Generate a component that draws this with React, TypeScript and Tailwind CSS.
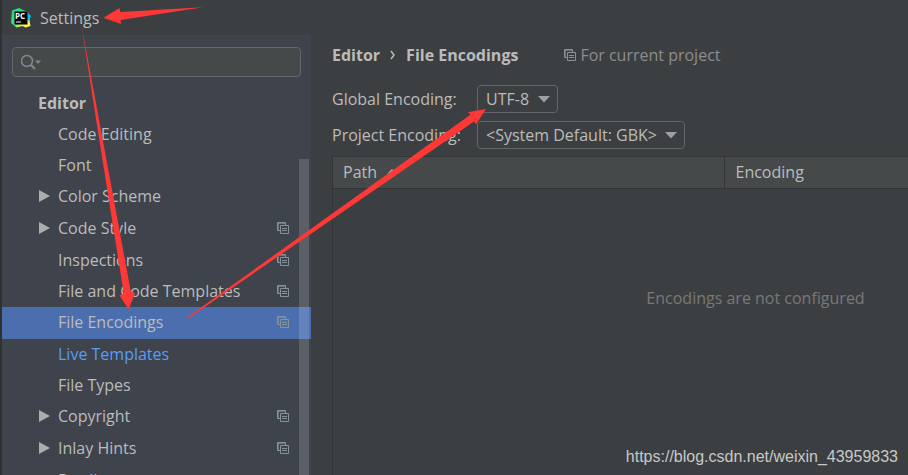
import { useState } from "react";

interface TreeItem {
  label: string;
  expandable?: boolean;
  perProject?: boolean;
  modified?: boolean;
}

const TREE: TreeItem[] = [
  { label: "Code Editing" },
  { label: "Font" },
  { label: "Color Scheme", expandable: true },
  { label: "Code Style", expandable: true, perProject: true },
  { label: "Inspections", perProject: true },
  { label: "File and Code Templates", perProject: true },
  { label: "File Encodings", perProject: true },
  { label: "Live Templates", modified: true },
  { label: "File Types" },
  { label: "Copyright", expandable: true, perProject: true },
  { label: "Inlay Hints", expandable: true, perProject: true },
  { label: "Duplicates" },
];

function Logo() {
  return (
    <svg className="w-5 h-5 shrink-0" viewBox="0 0 20 20" aria-hidden="true">
      <defs>
        <linearGradient id="logo" x1="0" y1="0" x2="1" y2="1">
          <stop offset="0" stopColor="#21d789" />
          <stop offset="0.5" stopColor="#3ddc84" />
          <stop offset="0.75" stopColor="#fcf84a" />
          <stop offset="1" stopColor="#fcf84a" />
        </linearGradient>
      </defs>
      <path d="M1 2.5 8 0l4 2 5 2 2.5 14-5 1.5-3-1.5-6 1.5L0 15z" fill="url(#logo)" />
      <path d="m16 4 4 4-2 5-2-2z" fill="#07c3f2" />
      <rect x="3.5" y="3.5" width="13" height="13" fill="#000" />
      <text x="4" y="10.5" fontSize="8" fontWeight="700" fill="#fff" fontFamily="'Open Sans', sans-serif">
        PC
      </text>
      <path d="M5 14h5" stroke="#fff" strokeWidth="1" />
    </svg>
  );
}

function ProjectIcon() {
  return (
    <svg className="w-3 h-3 shrink-0" viewBox="0 0 12 12" fill="none" stroke="#87939a" aria-hidden="true">
      <path d="M3 8.5H.5v-8h8V3" />
      <path d="M1 1.5h7M1.5 1v7" strokeOpacity="0.6" />
      <path d="M3.5 3.5h8v8h-8z" />
      <path d="M5 6.5h5M5 8.5h5" />
    </svg>
  );
}

function Combo({ id, options }: { id: string; options: string[] }) {
  return (
    <div className="relative w-fit">
      <select
        id={id}
        className="block appearance-none h-7 pl-2 pr-[27px] rounded border border-[#646769] bg-[#3c3f41] text-[#bbbbbb] outline-none"
      >
        {options.map((o) => (
          <option key={o}>{o}</option>
        ))}
      </select>
      <svg className="absolute right-2 top-2.5 w-3 h-2 pointer-events-none" viewBox="0 0 12 8" fill="#9da0a2" aria-hidden="true">
        <path d="M0 1h12L6 7.5z" />
      </svg>
    </div>
  );
}

// Pointers laid over the whole window
function Arrows() {
  return (
    <svg
      className="absolute -left-0.5 top-0 w-[908px] h-[475px] pointer-events-none"
      viewBox="0 0 908 475"
      fill="#fe3737"
      aria-hidden="true"
    >
      <path d="M103.5 17.7 119.5 8l.8 4L203 7.3 120.7 20l.3 4z" />
      <path d="M81.5 25 99.3 121 130.7 291l4.3 2.3-6.3 16.2-9.2-14 4.3-2L96.3 121z" />
      <path d="M187 317.5 470.7 114.5 467.7 112.3 486 109 476 124.5 474 121.5 188 318.5z" />
    </svg>
  );
}

export default function App() {
  const [selected, setSelected] = useState("File Encodings");
  const [query, setQuery] = useState("");

  return (
    <div className="relative flex flex-col h-screen overflow-hidden border-l-2 border-[#2f3132] bg-[#3c3f41] text-[#bbbbbb] text-base font-['Open_Sans','Noto_Sans',sans-serif]">
      <header className="flex items-center gap-[9px] h-[35px] shrink-0 pl-[9px]">
        <Logo />
        <h1>Settings</h1>
      </header>

      <div className="flex flex-1 min-h-0">
        <aside className="relative flex flex-col w-[309px] shrink-0 overflow-hidden bg-[#3f434c]">
          <label className="flex items-center gap-px h-[30px] shrink-0 mt-3 mx-2.5 pl-2 rounded-sm border border-[#646769] bg-[#45494a]">
            <svg className="w-5 h-4 shrink-0" viewBox="0 0 20 16" fill="none" stroke="#7f8b91" aria-hidden="true">
              <circle cx="6" cy="7" r="5.5" strokeWidth="1.5" />
              <path d="m10 11 4 4" strokeWidth="2" />
              <path d="M14 6.5h6l-3 3.5z" fill="#7f8b91" stroke="none" />
            </svg>
            <input
              type="text"
              aria-label="Search settings"
              value={query}
              onChange={(e) => setQuery(e.target.value)}
              className="flex-1 min-w-0 bg-transparent outline-none"
            />
          </label>

          <nav className="flex flex-col mt-[11px]">
            <h2 className="h-[31px] shrink-0 pl-9 leading-[30px] font-bold">Editor</h2>
            {TREE.map((item) => (
              <button
                key={item.label}
                type="button"
                onClick={() => setSelected(item.label)}
                className={`flex items-center shrink-0 pl-9 pr-[22px] pb-0.5 text-left whitespace-nowrap ${
                  item.expandable || item.label === selected ? "h-8" : "h-[31px]"
                } ${item.label === selected ? "bg-[#4b6eaf]" : ""} ${item.modified ? "text-[#589df6]" : ""}`}
              >
                <span className="w-5 shrink-0">
                  {item.expandable && (
                    <svg className="w-3 h-3" viewBox="0 0 12 12" fill="#adadad" aria-hidden="true">
                      <path d="M1 0v12l11-6z" />
                    </svg>
                  )}
                </span>
                <span className="flex-1">{item.label}</span>
                {item.perProject && <ProjectIcon />}
              </button>
            ))}
          </nav>
          <div className="absolute right-0.5 top-[124px] bottom-0 w-2.5 bg-white/15" />
        </aside>

        <main className="flex flex-col flex-1 min-w-0 pl-[21px]">
          <div className="flex items-center h-10 shrink-0">
            <h2 className="flex items-center font-bold">
              <span>Editor</span>
              <svg className="w-1.5 h-2.5 mx-2.5" viewBox="0 0 6 10" fill="none" stroke="#bbbbbb" strokeWidth="1.5" aria-hidden="true">
                <path d="m1 1 3 4-3 4" />
              </svg>
              <span>File Encodings</span>
            </h2>
            <p className="flex items-center gap-1 ml-[46px] text-[#8c8c8c]">
              <ProjectIcon />
              For current project
            </p>
          </div>

          <form className="grid grid-cols-[145px_auto] justify-start gap-y-2 mt-2.5 items-center">
            <label htmlFor="global-encoding">Global Encoding:</label>
            <Combo id="global-encoding" options={["UTF-8"]} />
            <label htmlFor="project-encoding">Project Encoding:</label>
            <Combo id="project-encoding" options={["<System Default: GBK>"]} />
          </form>

          <div className="flex flex-col flex-1 mt-[7px] border-l border-t border-[#323435]">
            <table className="w-full table-fixed text-left">
              <thead>
                <tr className="h-[31px] border-b border-[#323435] bg-[#45494a]">
                  <th className="w-[391px] pl-2.5 font-normal border-r border-[#323435]">
                    <span className="flex items-center gap-2.5">
                      Path
                      <svg className="w-2.5 h-1.5" viewBox="0 0 10 6" fill="none" stroke="#adadad" strokeWidth="1.5" aria-hidden="true">
                        <path d="m1 5 4-4 4 4" />
                      </svg>
                    </span>
                  </th>
                  <th className="pl-[11px] font-normal">Encoding</th>
                </tr>
              </thead>
            </table>
            <p className="mt-[97px] pl-[270px] text-center whitespace-nowrap text-[#787878]">
              Encodings are not configured
            </p>
          </div>
        </main>
      </div>

      <p className="absolute right-2.5 bottom-1.5 font-['Liberation_Sans',Arial,sans-serif] text-[#c8c8c8]">
        https://blog.csdn.net/weixin_43959833
      </p>
      <Arrows />
    </div>
  );
}
